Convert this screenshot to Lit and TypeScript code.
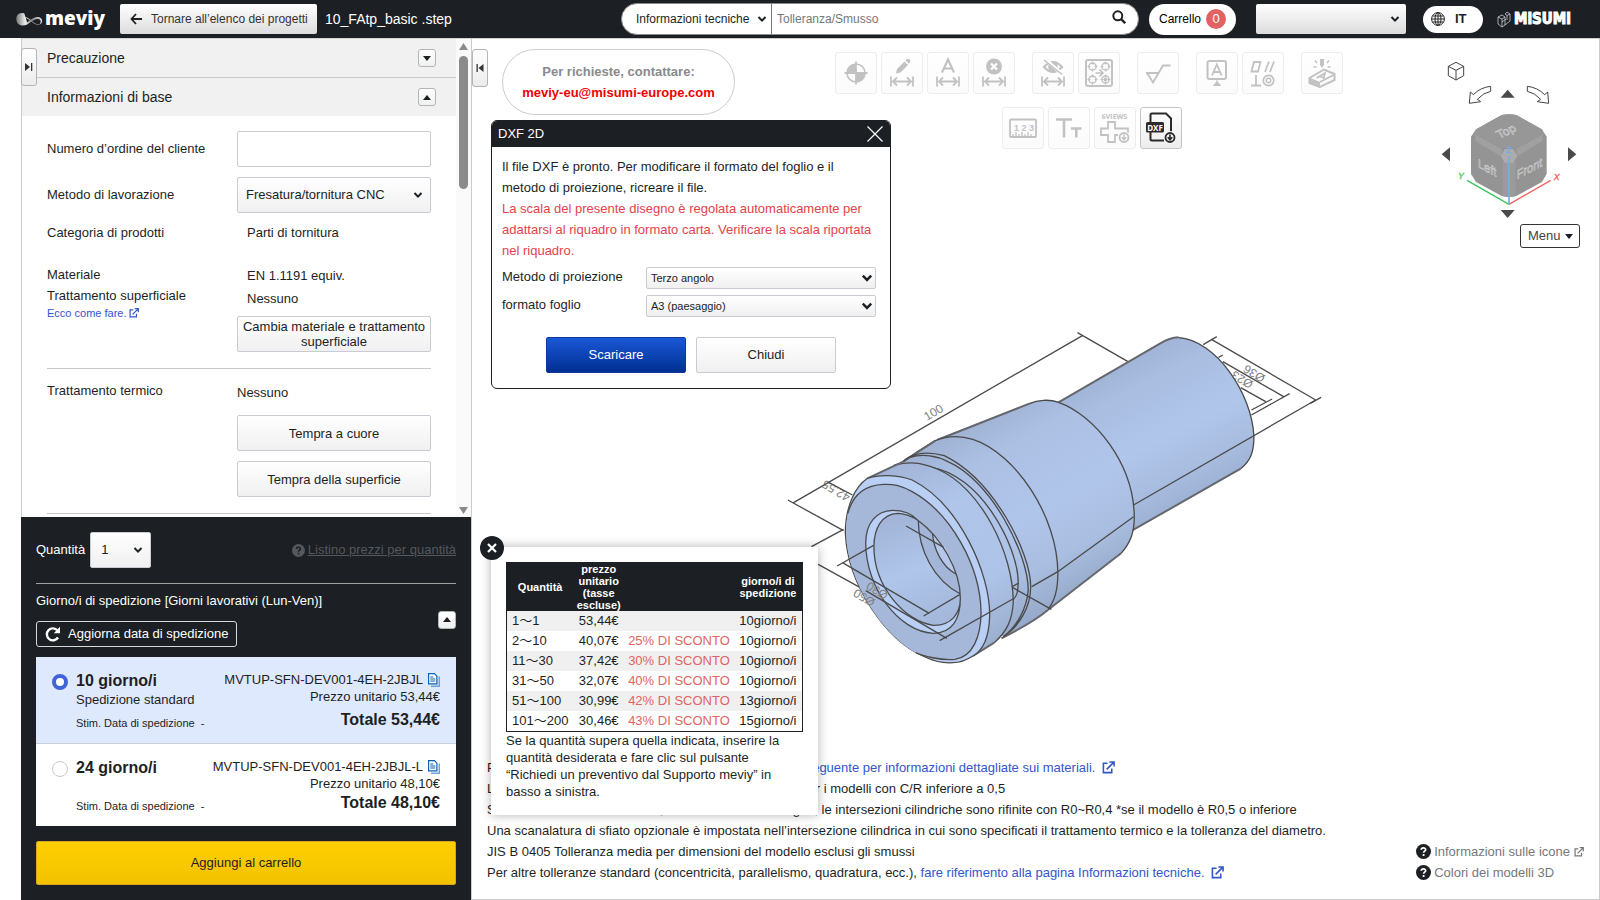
import { LitElement, html, svg, css } from "lit";
import { customElement, state } from "lit/decorators.js";

const chevron = html`<svg class="chev" viewBox="0 0 10 10" width="10" height="10" aria-hidden="true"><path d="M1.5 3l3.5 3.6L8.500 3" fill="none" stroke="currentColor" stroke-width="2"/></svg>`;

const external = html`<svg class="ext" viewBox="0 0 14 14" aria-hidden="true"><path d="M6 2.500H1.500v10h9V8M8 1h5v5M12.500 1.500L5 9" fill="none" stroke="currentColor" stroke-width="1.700"/></svg>`;

const triangle = (up: boolean) => html`<svg viewBox="0 0 10 6" width="8" height="5" aria-hidden="true"><path d=${up ? "M0 6L5 0l5 6z" : "M0 0h10L5 6z"} fill="#1c1f24"/></svg>`;

const help = html`<svg class="help" viewBox="0 0 16 16" width="15" height="15" aria-hidden="true"><circle cx="8" cy="8" r="8" fill="currentColor"/><path class="mark" d="M5.600 6.200C5.700 3.400 10.400 3.500 10.300 6.100 10.200 7.600 8.100 7.700 8.100 9.400M8.100 10.700v2" fill="none" stroke-width="1.900"/></svg>`;

const copyIcon = html`<svg viewBox="0 0 12 14" width="12" height="14" aria-hidden="true"><path d="M3 13.200h8.300V3.500" fill="none" stroke="#6ea3d8" stroke-width="1.500"/><path d="M.6.600h5.800l2.500 2.600v7.700H.6z" fill="#fff" stroke="#0b61b5" stroke-width="1.200"/><path d="M2.300 4h3M2.300 6h5M2.300 8h5" stroke="#0b61b5"/></svg>`;

const dim = svg`<path d="M9 23.500v10M31 23.500v10M11 28.500h18M15 24.500l-4 4 4 4M25 24.500l4 4-4 4" fill="none" stroke="currentColor" stroke-width="1.800"/>`;

const ICONS: Record<string, unknown> = {
  origin: svg`<circle cx="20" cy="20" r="9" fill="none" stroke="currentColor" stroke-width="1.600"/><path d="M20 20V11a9 9 0 0 0-9 9zM20 20v9a9 9 0 0 0 9-9z" fill="currentColor"/><path d="M20 8.500v23M8.500 20h23" stroke="currentColor" stroke-width="1.800"/>`,
  edit: svg`<path d="M14 20.500l1-4.500 7.500-7.500 3.500 3.500-7.500 7.500zM23.500 7.500l1.500-1.500q1.500-.8 2.700.4 1.200 1.200.4 2.700L26.800 10.700z" fill="currentColor"/>${dim}`,
  text: svg`<path d="M14 19.500l6-13 6 13M16.500 15.500h7" fill="none" stroke="currentColor" stroke-width="2.200"/>${dim}`,
  remove: svg`<circle cx="20" cy="13.500" r="8" fill="currentColor"/><path d="M17 10.500l6 6M23 10.500l-6 6" stroke="#fff" stroke-width="2.200"/>${dim}`,
  hide: svg`<path d="M11 14q9-10 18 0-9 10-18 0z" fill="none" stroke="currentColor" stroke-width="2.200"/><circle cx="20" cy="14" r="4.800" fill="currentColor"/><path d="M12 6l17 15" stroke="#fff" stroke-width="3.600"/><path d="M11 7l18 14.500" stroke="currentColor" stroke-width="1.600"/>${dim}`,
  holes: svg`<rect x="7" y="7" width="26" height="26" rx="2" fill="none" stroke="currentColor" stroke-width="2"/>${[[13.5, 13.5], [26.5, 13.5], [13.5, 26.5], [26.5, 26.5]].map(([x, y]) => svg`<circle cx=${x} cy=${y} r="3.600" fill="none" stroke="currentColor" stroke-width="1.500"/><path d=${`M${x - 5} ${y}h3M${x + 2} ${y}h3M${x} ${y - 5}v3M${x} ${y + 2}v3`} stroke="currentColor" stroke-width="1.200"/>`)}<circle cx="26.500" cy="26.500" r="2" fill="currentColor"/><path d="M16.500 20h7M20.500 16.500l3.500 3.500-3.500 3.500" fill="none" stroke="currentColor" stroke-width="1.700"/>`,
  finish: svg`<path d="M8 20h13M9.500 20.500l5.500 9L25 12.500h7.500" fill="none" stroke="currentColor" stroke-width="1.900"/>`,
  datum: svg`<rect x="10.500" y="8" width="18.500" height="18" rx="2" fill="none" stroke="currentColor" stroke-width="2"/><path d="M15 22.500l4.800-11 4.800 11M16.500 19h6.500" fill="none" stroke="currentColor" stroke-width="1.800"/><path d="M20 26v4M16.500 32.500l3.500-4 3.500 4z" fill="currentColor" stroke="currentColor"/>`,
  tolerance: svg`<path d="M8.500 18.500L11 9h6.500L15 18.500zM22 19l4-10.500M27 19l4-10.500M8 32.500h10M13 22v10.500" fill="none" stroke="currentColor" stroke-width="1.800"/><circle cx="25.500" cy="27.500" r="5.200" fill="none" stroke="currentColor" stroke-width="1.700"/><circle cx="25.500" cy="27.500" r="2.200" fill="none" stroke="currentColor" stroke-width="1.500"/>`,
  engrave: svg`<path d="M7.500 25L22 16.500 32.500 21v6L18 34 7.500 30z" fill="none" stroke="currentColor" stroke-width="2"/><path d="M7 24.500l11 4.500v6L7 30.500z" fill="currentColor"/><path d="M18 29l14.500-7.500" fill="none" stroke="currentColor" stroke-width="1.800"/><path d="M14.500 25l8.500-5-1.500 6M17.500 23.500l4 1" fill="none" stroke="currentColor" stroke-width="1.700"/><path d="M18 6h4v6l-2 3-2-3z" fill="currentColor"/><path d="M13 7.500l2 2.500M11.500 14h3M27 7.500l-2 2.500M28.500 14h-3" stroke="currentColor" stroke-width="1.500"/>`,
  ruler: svg`<rect x="7" y="11.500" width="26" height="17.500" rx="1" fill="none" stroke="currentColor" stroke-width="1.800"/><path d="M10 28v-2M13 28v-4M16 28v-2M19 28v-4M22 28v-2M25 28v-4M28 28v-2" stroke="currentColor" stroke-width="1.300"/><text x="21" y="22.500" text-anchor="middle" class="g10">1 2 3</text>`,
  size: svg`<path d="M7 11.500h16M15 11.500v18M22 20.500h10.500M27.300 20.500V29.500" fill="none" stroke="currentColor" stroke-width="2.600"/>`,
  views: svg`<text x="19.500" y="10.500" text-anchor="middle" class="g7">6VIEWS</text><path d="M13 14h7v6.500h13v6.500H20v7h-7v-7H6v-6.500h7z" fill="none" stroke="currentColor" stroke-width="1.800"/><circle cx="29" cy="29.500" r="6.500" fill="#fdfdfd"/><circle cx="29" cy="29.500" r="4.500" fill="none" stroke="currentColor" stroke-width="1.900"/><path d="M29 26.500v4M26.800 29.300l2.200 2.400 2.200-2.400" fill="none" stroke="currentColor" stroke-width="1.500"/>`,
  dxf: svg`<path d="M9.500 15V7q0-1.500 1.500-1.500h14l5 5V25M9.500 24v7q0 1.500 1.500 1.500h12" fill="none" stroke="currentColor" stroke-width="2"/><rect x="5" y="14" width="18" height="10.500" rx="1.500" fill="currentColor"/><text x="14" y="22.500" text-anchor="middle" class="dxf">DXF</text><circle cx="29" cy="29.500" r="6.500" fill="#f4f4f4"/><circle cx="29" cy="29.500" r="4.500" fill="none" stroke="currentColor" stroke-width="1.900"/><path d="M29 26.500v4M26.800 29.300l2.200 2.400 2.200-2.400" fill="none" stroke="currentColor" stroke-width="1.700"/>`,
};

@customElement("tool-bar")
class ToolBar extends LitElement {
  static styles = css`
    :host { display: flex; flex-direction: column; align-items: center; gap: 13px; color: #c2c2c2; }
    .row { display: flex; gap: 17px; }
    .second { padding-left: 6px; }
    .group { display: flex; gap: 4px; }
    .tool { width: 42px; height: 42px; padding: 0; border: 1px solid #ededed; border-radius: 3px; background: linear-gradient(#fff, #fbfbfb); color: inherit; display: block; }
    .tool svg { display: block; }
    .active { color: #2b2b2b; border-color: #c4c4c4; background: linear-gradient(#fff, #ededed); }
    .g10 { font: bold 9px "Liberation Sans", sans-serif; fill: currentColor; }
    .g7 { font: bold 7px "Open Sans", sans-serif; fill: currentColor; }
    .dxf { font: bold 8px "Open Sans", sans-serif; fill: #fff; }
  `;
  private tool(name: string, label: string, active = false) {
    return html`<button class="tool ${active ? "active" : ""}" ?disabled=${!active} aria-label=${label}><svg viewBox="0 0 40 40" width="40" height="40">${ICONS[name]}</svg></button>`;
  }
  render() {
    return html`
      <div class="row">
        <div class="group">${this.tool("origin", "Origine")}${this.tool("edit", "Modifica quota")}${this.tool("text", "Testo quota")}${this.tool("remove", "Elimina quota")}</div>
        <div class="group">${this.tool("hide", "Nascondi quote")}${this.tool("holes", "Fori")}</div>
        <div class="group">${this.tool("finish", "Rugosità")}</div>
        <div class="group">${this.tool("datum", "Riferimento")}${this.tool("tolerance", "Tolleranze geometriche")}</div>
        <div class="group">${this.tool("engrave", "Marcatura")}</div>
      </div>
      <div class="row second">
        <div class="group">${this.tool("ruler", "Misura")}${this.tool("size", "Dimensione testo")}${this.tool("views", "Sei viste")}${this.tool("dxf", "DXF", true)}</div>
      </div>`;
  }
}

@customElement("part-model")
class PartModel extends LitElement {
  static styles = css`
    :host { display: block; }
    svg { display: block; }
    path { vector-effect: non-scaling-stroke; }
    .edge { fill: none; stroke: #4a4a4a; stroke-width: 1.3; }
    .rim { fill: none; stroke: #65676d; stroke-width: 2; }
    .lbl { font: 12px "Liberation Sans", sans-serif; fill: #808080; }
  `;
  render() {
    return html`<svg viewBox="0 0 560 360" width="560" height="360" role="img" aria-label="Modello 3D">
      <defs>
        <linearGradient id="a" gradientUnits="userSpaceOnUse" x1="900" y1="150" x2="1130" y2="560"><stop offset="0" stop-color="#9fb3d5"/><stop offset=".2" stop-color="#a8bde0"/><stop offset=".55" stop-color="#b0c6eb"/><stop offset=".8" stop-color="#a8bddf"/><stop offset="1" stop-color="#9bb0d2"/></linearGradient>
        <linearGradient id="b" gradientUnits="userSpaceOnUse" x1="560" y1="290" x2="860" y2="800"><stop offset="0" stop-color="#9fb2d4"/><stop offset=".2" stop-color="#abc0e3"/><stop offset=".55" stop-color="#b0c5ea"/><stop offset=".8" stop-color="#a9bee0"/><stop offset="1" stop-color="#98abcc"/></linearGradient>
        <linearGradient id="c" gradientUnits="userSpaceOnUse" x1="290" y1="440" x2="590" y2="990"><stop offset="0" stop-color="#a0b3d5"/><stop offset=".3" stop-color="#b0c5ea"/><stop offset=".7" stop-color="#adc3e7"/><stop offset="1" stop-color="#9aadcd"/></linearGradient>
        <linearGradient id="d" gradientUnits="userSpaceOnUse" x1="300" y1="600" x2="430" y2="910"><stop offset="0" stop-color="#a2b5d8"/><stop offset=".5" stop-color="#afc5ea"/><stop offset="1" stop-color="#a3b8da"/></linearGradient>
      </defs>
      <text class="lbl" transform="translate(147 101) rotate(-31)">100</text>
      <text class="lbl" transform="translate(486 56) rotate(211)">Ø36</text>
      <text class="lbl" transform="translate(474 62) rotate(211)">Ø23</text>
      <text class="lbl" transform="translate(71 175) rotate(211)">42.55</text>
      <g transform="scale(.35714 .33333)">
        <path class="edge" d="M22 540L178 632M38 548L848 46M833 38L978 127M136 487L203 525M178 628L88 680M107 733L240 812M1185 74L1223 50M1208 58L1500 240M1485 250L1515 232M1228 112L1240 105M1240 125L1410 230M1320 285L1427 221M1320 270L1378 237M1290 203L1360 245"/>
        <path fill="url(#a)" d="M770 253L1060 73C1080 60 1095 52 1116 52C1220 60 1322 220 1327 350C1327 400 1315 425 1290 446L980 635L850 500Z"/>
        <path class="rim" d="M770 253L1060 73C1080 60 1095 52 1116 52M1290 446L985 632"/>
        <path class="edge" d="M1116 53C1220 60 1322 220 1327 350C1327 400 1315 425 1290 446"/>
        <path fill="url(#b)" d="M440 357L700 250C720 240 755 237 780 247C880 285 990 430 992 590C992 640 980 670 955 700L745 872L560 700Z"/>
        <path class="rim" d="M440 360L700 250M955 700L750 870"/>
        <path class="edge" d="M700 250C720 240 755 237 780 247C880 285 990 430 992 590C992 640 980 670 955 700"/>
        <path fill="url(#b)" d="M345 425L385 395L435 362C470 346 510 348 540 358C660 400 778 590 778 760C778 820 765 850 750 868C720 895 690 915 625 952L500 700Z"/>
        <path class="edge" d="M345 425L385 395L435 362C470 346 510 348 540 358C660 400 778 590 778 760C778 820 765 850 750 868"/>
        <path class="rim" d="M750 870C720 897 690 917 620 955M345 425L435 362"/>
        <path class="edge" d="M345 425C360 405 400 390 460 407C600 480 702 700 702 800C702 860 670 920 625 950M365 412C400 400 440 408 470 425C590 480 695 700 695 810C692 860 665 920 625 950"/>
        <path fill="url(#c)" d="M425 442C560 460 668 680 667 790C666 860 645 920 610 960Z"/>
        <path class="edge" d="M420 442C560 460 668 680 667 790C666 820 662 830 652 840"/>
        <path fill="url(#c)" d="M245 475L320 435C380 420 410 435 440 447C560 500 655 700 653 850C650 900 635 935 600 968L540 1005C520 1020 490 1030 455 1028L300 800Z"/>
        <path class="edge" d="M320 435C380 420 410 435 440 447C560 500 655 700 653 850C650 900 635 935 600 968"/>
        <path class="rim" d="M245 475L345 425M600 968L540 1008"/>
        <path fill="#b9cff5" d="M245 475C280 462 330 465 370 480C500 550 590 760 587 890C585 950 570 990 540 1008C520 1022 500 1028 485 1028C460 1030 430 1024 400 1008C300 960 190 800 183 640C183 560 210 500 245 475Z"/>
        <path class="edge" d="M245 475C280 462 330 465 370 480C500 550 590 760 587 890C585 950 570 990 540 1008C520 1022 500 1028 485 1028C460 1030 430 1024 400 1008C300 960 190 800 183 640C183 560 210 500 245 475Z"/>
        <path fill="#a5b8da" d="M192 570C205 520 240 495 290 493C320 492 340 497 370 515C480 580 562 740 563 880C562 950 540 1010 490 1018C450 1025 400 1008 380 998C290 945 188 790 185 640C185 610 188 590 192 570Z"/>
        <path class="edge" d="M190 580C205 520 240 495 290 493C320 492 340 497 370 515C480 580 562 740 563 880C562 950 540 1010 490 1018C450 1022 400 1008 380 998"/>
        <path fill="#b9cff5" d="M240 670C240 610 270 572 315 571C345 571 370 582 385 600C450 650 505 750 505 835C505 900 480 940 430 940C330 935 240 800 240 670Z"/>
        <path fill="url(#d)" d="M263 680C263 625 285 582 330 580C350 580 370 590 385 600C450 650 505 750 505 835C505 880 480 917 430 916C350 905 263 800 263 680Z"/>
        <path fill="#a3b6d8" d="M387 600C388 690 430 780 505 822C505 740 450 650 387 600Z"/>
        <path fill="#b4c8ec" d="M427 640C430 690 455 740 492 762C485 720 460 670 427 640Z"/>
        <path class="edge" d="M240 670C240 610 270 572 315 571C345 571 370 582 385 600C450 650 505 750 505 835C505 900 480 940 430 940C330 935 240 800 240 670ZM263 680C263 625 285 582 330 580C350 580 370 590 385 600M263 680C263 800 350 905 430 916C480 917 505 880 505 835M387 600C388 690 430 780 505 822M427 640C430 690 455 740 492 762"/>
        <path class="edge" d="M240 812L467 955M160 738L262 676M175 728L418 880M402 888L503 824M447 962L652 837M652 803L760 868M650 800L667 790M705 800L778 755L990 590M990 555L1500 240M353 618L458 682"/>
      </g>
      <text class="lbl" transform="translate(109 273) rotate(211)">Ø30</text>
      <text class="lbl" transform="translate(96 280) rotate(211)">Ø50</text>
    </svg>`;
  }
}

@customElement("view-cube")
class ViewCube extends LitElement {
  static styles = css`
    :host { display: block; }
    svg { display: block; }
    .face { font: 38px "Liberation Sans", sans-serif; fill: #a2a2a2; stroke: #d4d4d4; stroke-width: 1.5; }
    .ax { font: italic 26px "Liberation Sans", sans-serif; }
  `;
  render() {
    return html`<svg viewBox="60 30 420 480" width="140" height="160" role="img" aria-label="Orientamento vista">
      <g fill="#fff" stroke="#444" stroke-width="3" stroke-linejoin="round">
        <path d="M108 37l23 12v28l-23 13-23-13V49zM85 49l23 12 23-12M108 61v29"/>
        <path d="M212 109v15q-22 4-40 24l10 7-34 5 3-34 9 8q22-22 52-25z"/>
        <path d="M322 109v15q22 4 40 24l-10 7 34 5-3-34-9 8q-22-22-52-25z"/>
      </g>
      <g fill="#4a4a4a"><path d="M242 143l21-24 21 24zM242 480h42l-21 24zM90 292v42l-25-21zM444 292v42l25-21z"/></g>
      <path fill="#949494" d="M245 195q22-5 44 0l77 43 14 22v112l-14 24-77 42q-22 6-44 0l-77-42-15-24V260l15-22z"/>
      <path fill="#979797" d="M166 240l79-45q22-5 44 0l78 45-4 17-74 38-44-1-74-38z"/>
      <path fill="#a0a0a0" d="M166 242l4 14 76 41-4 22-76-46zM368 242l-4 14-76 41 4 22 76-46z"/>
      <path fill="#9b9b9b" d="M248 336h38v102q-19 4-38 0z"/>
      <path fill="#acacac" d="M254 297h26l12 21-12 20h-26l-12-20z"/>
      <text class="face" transform="matrix(.87 -.4 .5 .8 238 266)">Top</text>
      <text class="face" transform="matrix(.87 .45 0 1 174 352)">Left</text>
      <text class="face" transform="matrix(.87 -.45 0 1 290 388)">Front</text>
      <path d="M267 463L141 391" stroke="#3ac45a" stroke-width="4"/>
      <path d="M267 463l125-72" stroke="#f56060" stroke-width="4"/>
      <path d="M267 463V318" stroke="#74aee8" stroke-width="5"/>
      <text class="ax" x="114" y="388" fill="#3ac45a" stroke="#3ac45a">Y</text>
      <text class="ax" x="401" y="390" fill="#f56060" stroke="#f56060">X</text>
      <text class="ax" x="258" y="308" fill="#74aee8" stroke="#74aee8">Z</text>
    </svg>`;
  }
}

const PRICES = [
  ["1～1", "53,44€", "", "10giorno/i"],
  ["2～10", "40,07€", "25% DI SCONTO", "10giorno/i"],
  ["11～30", "37,42€", "30% DI SCONTO", "10giorno/i"],
  ["31～50", "32,07€", "40% DI SCONTO", "10giorno/i"],
  ["51～100", "30,99€", "42% DI SCONTO", "13giorno/i"],
  ["101～200", "30,46€", "43% DI SCONTO", "15giorno/i"],
];

const OFFERS = [
  { days: "10 giorno/i", kind: "Spedizione standard", code: "MVTUP-SFN-DEV001-4EH-2JBJL", price: "53,44€" },
  { days: "24 giorno/i", kind: "", code: "MVTUP-SFN-DEV001-4EH-2JBJL-L", price: "48,10€" },
];

@customElement("app-root")
class AppRoot extends LitElement {
  @state() private offer = 0;

  static styles = css`
    :host { display: grid; grid-template-rows: 38px minmax(0, 1fr); height: 100vh; min-width: 1280px; background: #fff; color: #1c1f24; font: 13px/16px "Liberation Sans", Arial, "Noto Sans CJK JP", sans-serif; overflow: hidden; }
    * { box-sizing: border-box; }
    button, select, input { font: inherit; color: inherit; margin: 0; }
    a { color: #3355cc; text-decoration: none; }
    p { margin: 0; }
    svg { flex: none; }
    .btn { border: 1px solid #c9cad2; border-radius: 2px; background: linear-gradient(#fff, #f0f0f0); padding: 0 2px; }
    .pick { display: grid; align-items: center; }
    .pick > * { grid-area: 1 / 1; }
    .pick select { appearance: none; width: 100%; height: 100%; border: 1px solid #c9cad2; border-radius: 2px; background: linear-gradient(#fff, #f0f0f0); }
    .chev { justify-self: end; pointer-events: none; margin-right: 8px; }
    .ext { width: 10px; height: 10px; }

    .head { display: flex; align-items: center; background: #1c1f24; color: #fff; font-size: 12px; white-space: nowrap; }
    .logo { display: flex; align-items: center; gap: 2px; margin-left: 15px; width: 105px; font: 800 19px/24px "Open Sans", sans-serif; color: #fff; padding-bottom: 2px; }
    .logo svg { margin-top: 2px; }
    .back { display: flex; align-items: center; gap: 9px; width: 197px; height: 30px; border: 0; border-radius: 2px; background: linear-gradient(#fff, #dcdcdc); color: #333; padding: 0 10px; }
    .file { font-size: 14px; margin-left: 8px; flex: 1; }
    .search { display: flex; width: 518px; height: 32px; background: #fff; border: 1px solid #8a8a8a; border-radius: 16px; overflow: hidden; color: #1c1f24; }
    .search .pick { width: 150px; border-right: 1px solid #777; }
    .search select { border: 0; background: none; padding: 0 0 0 14px; }
    .search .chev { margin-right: 4px; }
    .search input { flex: 1; border: 0; padding: 0 5px; outline: 0; background: none; }
    .search input::placeholder { color: #777; }
    .glass { border: 0; background: none; padding: 0 12px 4px 0; display: flex; align-items: center; }
    .cart { display: flex; align-items: center; gap: 5px; margin-left: 10px; width: 87px; height: 31px; border-radius: 16px; background: #fff; color: #000; padding-left: 10px; }
    .count { width: 20px; height: 20px; border-radius: 10px; background: #e06262; color: #fff; font-size: 13px; line-height: 19px; text-align: center; }
    .user { width: 150px; height: 30px; margin-left: 20px; color: #1c1f24; }
    .user select { background: linear-gradient(#fff, #dcdcdc); border: 0; }
    .user .chev { margin-right: 6px; }
    .lang { display: flex; align-items: center; gap: 10px; width: 60px; height: 27px; margin-left: 17px; border: 0; border-radius: 14px; background: #fff; color: #1c1f24; font-weight: bold; font-size: 13px; padding: 0 8px; }
    .brand { display: flex; align-items: center; gap: 3px; width: 76px; margin: 0 27px 0 14px; color: #fff; font: bold 15px/20px "DejaVu Sans Condensed", sans-serif; -webkit-text-stroke: 1px #fff; }

    .body { display: grid; grid-template-columns: 450px minmax(0, 1fr); padding-left: 21px; min-height: 0; }
    .side { position: relative; display: flex; flex-direction: column; min-height: 0; }
    .upper { flex: 1; min-height: 0; display: flex; border-top: 1px solid #d4d4d4; border-left: 1px solid #ccc; }
    .content { flex: 1; overflow: hidden; }
    .bar { width: 15px; background: #fafafa; display: flex; flex-direction: column; align-items: center; padding: 4px 0 3px; }
    .thumb { width: 9px; height: 133px; border-radius: 5px; background: #8b8b8b; margin: 6px 0 auto; }
    .acc { display: flex; justify-content: space-between; align-items: center; height: 38px; padding: 0 20px 0 25px; background: #f1f1f1; font-size: 14px; }
    .acc + .acc { height: 39px; border-top: 1px solid #ccc; }
    .fold { width: 18px; height: 18px; padding: 0; border: 1px solid #b4b4b4; border-radius: 3px; background: linear-gradient(#fff, #f0f0f0); display: flex; align-items: center; justify-content: center; }
    .tab { position: absolute; top: 10px; left: 0; width: 16px; height: 38px; padding: 0; border: 1px solid #b4b4b4; border-radius: 3px; background: linear-gradient(#fff, #ececec); display: flex; align-items: center; justify-content: center; }
    .form { padding: 15px 25px 0; display: grid; grid-template-columns: 190px 1fr; row-gap: 10px; align-items: center; }
    .field { height: 36px; width: 100%; border: 1px solid #c9cad2; border-radius: 2px; padding: 0 8px; background: #fff; }
    .form .pick { height: 36px; }
    .form .pick select { padding: 0 8px; }
    .val { padding-left: 10px; }
    .cat { padding-top: 2px; padding-bottom: 13px; }
    .mat { align-self: start; line-height: 21px; }
    .mat a { display: flex; align-items: center; gap: 3px; font-size: 11px; line-height: 14px; }
    .matv { line-height: 23px; }
    .wide { display: block; width: 100%; height: 36px; line-height: 15px; }
    .matv .wide { margin-top: 6px; }
    .sep { grid-column: 1 / -1; height: 1px; background: #c8c8c8; margin: 6px 0 4px; }
    .top { align-self: start; }
    .heat { display: flex; flex-direction: column; gap: 10px; padding-top: 2px; }
    .heat p { padding-bottom: 4px; }

    .order { background: #1c1f24; color: #fff; padding: 15px; }
    .qty { display: flex; align-items: center; gap: 5px; padding-bottom: 15px; border-bottom: 1px solid #a0a0a0; }
    .qty .pick { width: 61px; height: 36px; color: #1c1f24; }
    .qty select { padding-left: 10px; }
    .list { margin-left: auto; display: flex; align-items: center; gap: 3px; color: #55585c; }
    .list span { text-decoration: underline; }
    .list .help { width: 13px; height: 13px; }
    .mark { stroke: #1c1f24; }
    .ship { display: flex; justify-content: space-between; align-items: center; padding: 8px 0 10px; }
    .ship p { line-height: 18px; padding-bottom: 11px; }
    .refresh { display: flex; align-items: center; gap: 7px; height: 26px; padding: 0 8px; border: 1px solid #d8d8d8; border-radius: 3px; background: none; color: #fff; }
    .card { display: flex; justify-content: space-between; background: #fff; color: #1c1f24; padding: 14px 16px 13px; min-height: 82px; white-space: nowrap; }
    .card.on { background: #dfe9fe; border-bottom: 1px solid #ccd0d8; min-height: 87px; }
    .card input { appearance: none; width: 16px; height: 16px; border: 1px solid #c8c8cc; border-radius: 8px; background: #fff; margin: 3px 8px 0 0; }
    .card input:checked { border: 4px solid #4064d8; }
    .col { display: flex; flex-direction: column; line-height: 17px; }
    .col > :last-child { margin-top: auto; }
    .days { font-size: 16px; line-height: 20px; }
    .est { font-size: 11px; line-height: 14px; }
    .right { text-align: right; margin-left: auto; }
    .code { display: flex; justify-content: flex-end; align-items: center; gap: 5px; }
    .add { display: block; width: 100%; height: 44px; margin-top: 15px; border: 1px solid #d9a520; border-radius: 2px; background: linear-gradient(#ffcf00, #f2c200); color: #1c1f24; }

    .view { position: relative; display: flex; flex-direction: column; justify-content: space-between; border: 1px solid #ccc; min-width: 0; }
    .head2 { display: flex; align-items: flex-start; padding: 10px 19px 0 30px; }
    .ask { width: 233px; height: 66px; border: 1px solid #ccc; border-radius: 33px; display: flex; flex-direction: column; justify-content: center; text-align: center; font-weight: bold; line-height: 21px; color: #8a8a8a; }
    .ask a { color: #ee0000; }
    .head2 tool-bar { margin: 3px 97px 0 auto; position: relative; }
    .nav { display: flex; flex-direction: column; align-items: flex-end; padding-top: 11px; gap: 4px; }
    .menu { display: flex; align-items: center; justify-content: space-between; width: 60px; height: 24px; border: 1px solid #333; border-radius: 3px; background: #fff; padding: 0 6px 0 7px; color: #444; }
    .model { position: absolute; left: 308px; top: 281px; }
    .foot { position: relative; display: flex; justify-content: space-between; align-items: flex-end; padding: 0 15px 16px; line-height: 21px; }
    .foot a .ext { width: 13px; height: 13px; margin-left: 3px; vertical-align: -2px; }
    .aux { display: flex; flex-direction: column; }
    .aux a { display: flex; align-items: center; gap: 3px; color: #777; }
    .aux a .ext { width: 10px; height: 10px; margin-left: 1px; }
    .aux .help { color: #1c1f24; }
    .aux .mark { stroke: #fff; }

    .dialog { position: absolute; left: 19px; top: 81px; width: 400px; border: 1px solid #1c1f24; border-radius: 6px; background: #fff; overflow: hidden; padding-bottom: 15px; }
    .title { display: flex; justify-content: space-between; align-items: center; height: 26px; padding: 0 7px 0 6px; background: #1c1f24; color: #fff; }
    .x { border: 0; background: none; padding: 0; display: flex; }
    .msg { padding: 9px 10px 0; line-height: 21px; color: #1c1f24; }
    .warn { color: #e2434b; display: block; }
    .opts { display: grid; grid-template-columns: 144px 230px; row-gap: 6px; padding: 6px 10px 20px; }
    .opts label { line-height: 20px; }
    .opts .pick { height: 22px; font-size: 11px; }
    .opts select { padding: 0 4px; }
    .opts .chev { margin-right: 3px; width: 12px; height: 12px; }
    .acts { display: flex; justify-content: center; gap: 10px; }
    .acts .btn { width: 140px; height: 36px; }
    .acts .go { background: linear-gradient(#1a58d6, #002f92); border-color: #0a3a9e; color: #fff; }

    .pop { position: absolute; left: 19px; top: 508px; width: 327px; height: 268px; padding: 15px; background: #fff; box-shadow: 0 0 10px rgba(0, 0, 0, .3); line-height: 17px; }
    .pop p { padding-right: 20px; }
    .close { position: absolute; left: -11px; top: -11px; width: 24px; height: 24px; border: 0; border-radius: 12px; background: #1c1f24; padding: 0; display: flex; align-items: center; justify-content: center; }
    table { width: 297px; border-collapse: collapse; border: 1px solid #1c1f24; }
    th { background: #1c1f24; color: #fff; font-size: 11px; line-height: 12px; padding: 0; height: 48px; }
    td { padding: 0 0 0 5px; height: 20px; line-height: 20px; white-space: nowrap; }
    td + td { text-align: center; padding: 0; }
    tr:nth-child(odd) td { background: #f0f0f0; }
    .off { color: #e06464; }
  `;

  private card(o: (typeof OFFERS)[number], i: number) {
    return html`<label class="card ${i === this.offer ? "on" : ""}">
      <input type="radio" name="offer" .checked=${i === this.offer} @change=${() => (this.offer = i)} />
      <span class="col"><b class="days">${o.days}</b><span>${o.kind}</span><span class="est">Stim. Data di spedizione&nbsp; -</span></span>
      <span class="col right"><span class="code">${o.code}${copyIcon}</span><span>Prezzo unitario ${o.price}</span><b class="days">Totale ${o.price}</b></span>
    </label>`;
  }

  render() {
    return html`
      <header class="head">
        <div class="logo">
          <svg viewBox="0 0 28 16" width="28" height="15"><defs><linearGradient id="m" x2="1"><stop offset="0" stop-color="#777"/><stop offset=".35" stop-color="#eee"/><stop offset=".6" stop-color="#888"/><stop offset="1" stop-color="#ddd"/></linearGradient></defs><path d="M9 1.500C3 0 0 4 .5 8.500 1.500 15 9 16 14 12c4-3 7-5 10-4.500 3 .5 3 4.500 1 5.500-4 1-7-3-12-6.500C9 4 5 4 4 7c-.5 4 3 6 7 4C6 12 5 8 7 6.500c3-2 7 2 11 5 4 3 9 3 10-1 .5-4-3-6-7-5-4 .8-6 4-9 5.500" fill="url(#m)"/></svg>meviy</div>
        <button class="back"><svg viewBox="0 0 12 12" width="12" height="12"><path d="M6 1L1.500 6 6 11M2 6h10" fill="none" stroke="#222" stroke-width="1.800"/></svg>Tornare all’elenco dei progetti</button>
        <div class="file">10_FAtp_basic .step</div>
        <div class="search">
          <div class="pick"><select aria-label="Tipo di ricerca"><option>Informazioni tecniche</option></select>${chevron}</div>
          <input aria-label="Ricerca" placeholder="Tolleranza/Smusso" />
          <button class="glass" aria-label="Cerca"><svg viewBox="0 0 14 14" width="14" height="14"><circle cx="5.800" cy="5.800" r="4.500" fill="none" stroke="#222" stroke-width="2"/><path d="M9 9l4.200 4.200" stroke="#222" stroke-width="2.400"/></svg></button>
        </div>
        <a class="cart" href="#">Carrello<span class="count">0</span></a>
        <div class="pick user"><select aria-label="Utente"><option></option></select>${chevron}</div>
        <button class="lang"><svg viewBox="0 0 14 14" width="14" height="14"><g fill="none" stroke="#222"><circle cx="7" cy="7" r="6.400"/><ellipse cx="7" cy="7" rx="3" ry="6.400"/><path d="M7 .6v12.800M.6 7h12.800M1.500 4h11M1.500 10h11"/></g></svg>IT</button>
        <div class="brand"><svg viewBox="0 0 14 17" width="14" height="17"><path d="M1 6l4-2 3 2v8l-3 2-4-3zM1 6l4 2v8M5 8l3-2M8 3l2-2 3 2v7l-5 4M8 3l2 1.500L13 3M10 4.500V9M5 11l4-3" fill="none" stroke="#ccc" stroke-width=".8"/></svg>MiSUMi</div>
      </header>
      <div class="body">
        <aside class="side">
          <div class="upper">
            <div class="content">
              <div class="acc">Precauzione<button class="fold" aria-label="Apri">${triangle(false)}</button></div>
              <div class="acc">Informazioni di base<button class="fold" aria-label="Chiudi">${triangle(true)}</button></div>
              <div class="form">
                <label for="po">Numero d’ordine del cliente</label><input id="po" class="field" />
                <label for="method">Metodo di lavorazione</label>
                <div class="pick"><select id="method"><option>Fresatura/tornitura CNC</option></select>${chevron}</div>
                <span class="cat">Categoria di prodotti</span><span class="cat val">Parti di tornitura</span>
                <div class="mat">Materiale<br />Trattamento superficiale<a href="#">Ecco come fare.${external}</a></div>
                <div class="matv"><p class="val">EN 1.1191 equiv.</p><p class="val">Nessuno</p><button class="btn wide">Cambia materiale e trattamento superficiale</button></div>
                <div class="sep"></div>
                <span class="top">Trattamento termico</span>
                <div class="heat"><p>Nessuno</p><button class="btn wide">Tempra a cuore</button><button class="btn wide">Tempra della superficie</button></div>
                <div class="sep"></div>
              </div>
            </div>
            <div class="bar"><svg viewBox="0 0 9 7" width="9" height="7"><path d="M0 7L4.500 0 9 7z" fill="#8b8b8b"/></svg><div class="thumb"></div><svg viewBox="0 0 9 7" width="9" height="7"><path d="M0 0h9L4.500 7z" fill="#8b8b8b"/></svg></div>
          </div>
          <div class="order">
            <div class="qty"><label for="qty">Quantità</label><div class="pick"><select id="qty"><option>1</option></select>${chevron}</div><a class="list" href="#">${help}<span>Listino prezzi per quantità</span></a></div>
            <div class="ship">
              <div><p>Giorno/i di spedizione [Giorni lavorativi (Lun-Ven)]</p>
                <button class="refresh"><svg viewBox="0 0 16 16" width="16" height="16"><path d="M13 11.500A6 6 0 1 1 12.500 4.500" fill="none" stroke="#fff" stroke-width="2.400"/><path d="M15 .8v6.400H8.800z" fill="#fff"/></svg>Aggiorna data di spedizione</button></div>
              <button class="fold" aria-label="Riduci">${triangle(true)}</button>
            </div>
            ${OFFERS.map((o, i) => this.card(o, i))}
            <button class="add">Aggiungi al carrello</button>
          </div>
          <button class="tab" aria-label="Espandi pannello"><svg viewBox="0 0 8 8" width="8" height="8"><path d="M0 0l5 4-5 4zM6 0h1.300v8H6z" fill="#333"/></svg></button>
        </aside>
        <main class="view">
          <part-model class="model"></part-model>
          <button class="tab" aria-label="Riduci pannello"><svg viewBox="0 0 8 8" width="8" height="8"><path d="M7.500 0l-5 4 5 4zM.5 0h1.300v8H.5z" fill="#333"/></svg></button>
          <div class="head2">
            <div class="ask"><span>Per richieste, contattare:</span><a href="mailto:meviy-eu@misumi-europe.com">meviy-eu@misumi-europe.com</a></div>
            <tool-bar></tool-bar>
            <div class="nav"><view-cube></view-cube><button class="menu">Menu${triangle(false)}</button></div>
          </div>
          <div class="foot">
            <div>
              <p>Per i materiali selezionabili, <a href="#">fare riferimento alla pagina seguente per informazioni dettagliate sui materiali. ${external}</a></p>
              <p>La lavorazione degli spigoli non è indicata nel disegno per i modelli con C/R inferiore a 0,5</p>
              <p>Se non è indicato un raccordo, nel modello o nel disegno, le intersezioni cilindriche sono rifinite con R0~R0,4 *se il modello è R0,5 o inferiore</p>
              <p>Una scanalatura di sfiato opzionale è impostata nell’intersezione cilindrica in cui sono specificati il trattamento termico e la tolleranza del diametro.</p>
              <p>JIS B 0405 Tolleranza media per dimensioni del modello esclusi gli smussi</p>
              <p>Per altre tolleranze standard (concentricità, parallelismo, quadratura, ecc.), <a href="#">fare riferimento alla pagina Informazioni tecniche. ${external}</a></p>
            </div>
            <div class="aux"><a href="#">${help}Informazioni sulle icone ${external}</a><a href="#">${help}Colori dei modelli 3D</a></div>
          </div>
          <section class="dialog" aria-label="DXF 2D">
            <div class="title">DXF 2D<button class="x" aria-label="Chiudi finestra"><svg viewBox="0 0 16 16" width="16" height="16"><path d="M.5.500l15 15M15.500.500l-15 15" stroke="#fff" stroke-width="1.200"/></svg></button></div>
            <p class="msg">Il file DXF è pronto. Per modificare il formato del foglio e il metodo di proiezione, ricreare il file.<span class="warn">La scala del presente disegno è regolata automaticamente per adattarsi al riquadro in formato carta. Verificare la scala riportata nel riquadro.</span></p>
            <div class="opts">
              <label for="proj">Metodo di proiezione</label><div class="pick"><select id="proj"><option>Terzo angolo</option></select>${chevron}</div>
              <label for="sheet">formato foglio</label><div class="pick"><select id="sheet"><option>A3 (paesaggio)</option></select>${chevron}</div>
            </div>
            <div class="acts"><button class="btn go">Scaricare</button><button class="btn">Chiudi</button></div>
          </section>
          <section class="pop" aria-label="Listino prezzi">
            <button class="close" aria-label="Chiudi listino"><svg viewBox="0 0 10 10" width="10" height="10"><path d="M1 1l8 8M9 1L1 9" stroke="#fff" stroke-width="2.200"/></svg></button>
            <table>
              <colgroup><col width="67" /><col width="51" /><col width="110" /><col width="69" /></colgroup>
              <thead><tr><th>Quantità</th><th>prezzo unitario (tasse escluse)</th><th></th><th>giorno/i di spedizione</th></tr></thead>
              <tbody>${PRICES.map((r) => html`<tr><td>${r[0]}</td><td>${r[1]}</td><td class="off">${r[2]}</td><td>${r[3]}</td></tr>`)}</tbody>
            </table>
            <p>Se la quantità supera quella indicata, inserire la quantità desiderata e fare clic sul pulsante “Richiedi un preventivo dal Supporto meviy” in basso a sinistra.</p>
          </section>
        </main>
      </div>`;
  }
}
